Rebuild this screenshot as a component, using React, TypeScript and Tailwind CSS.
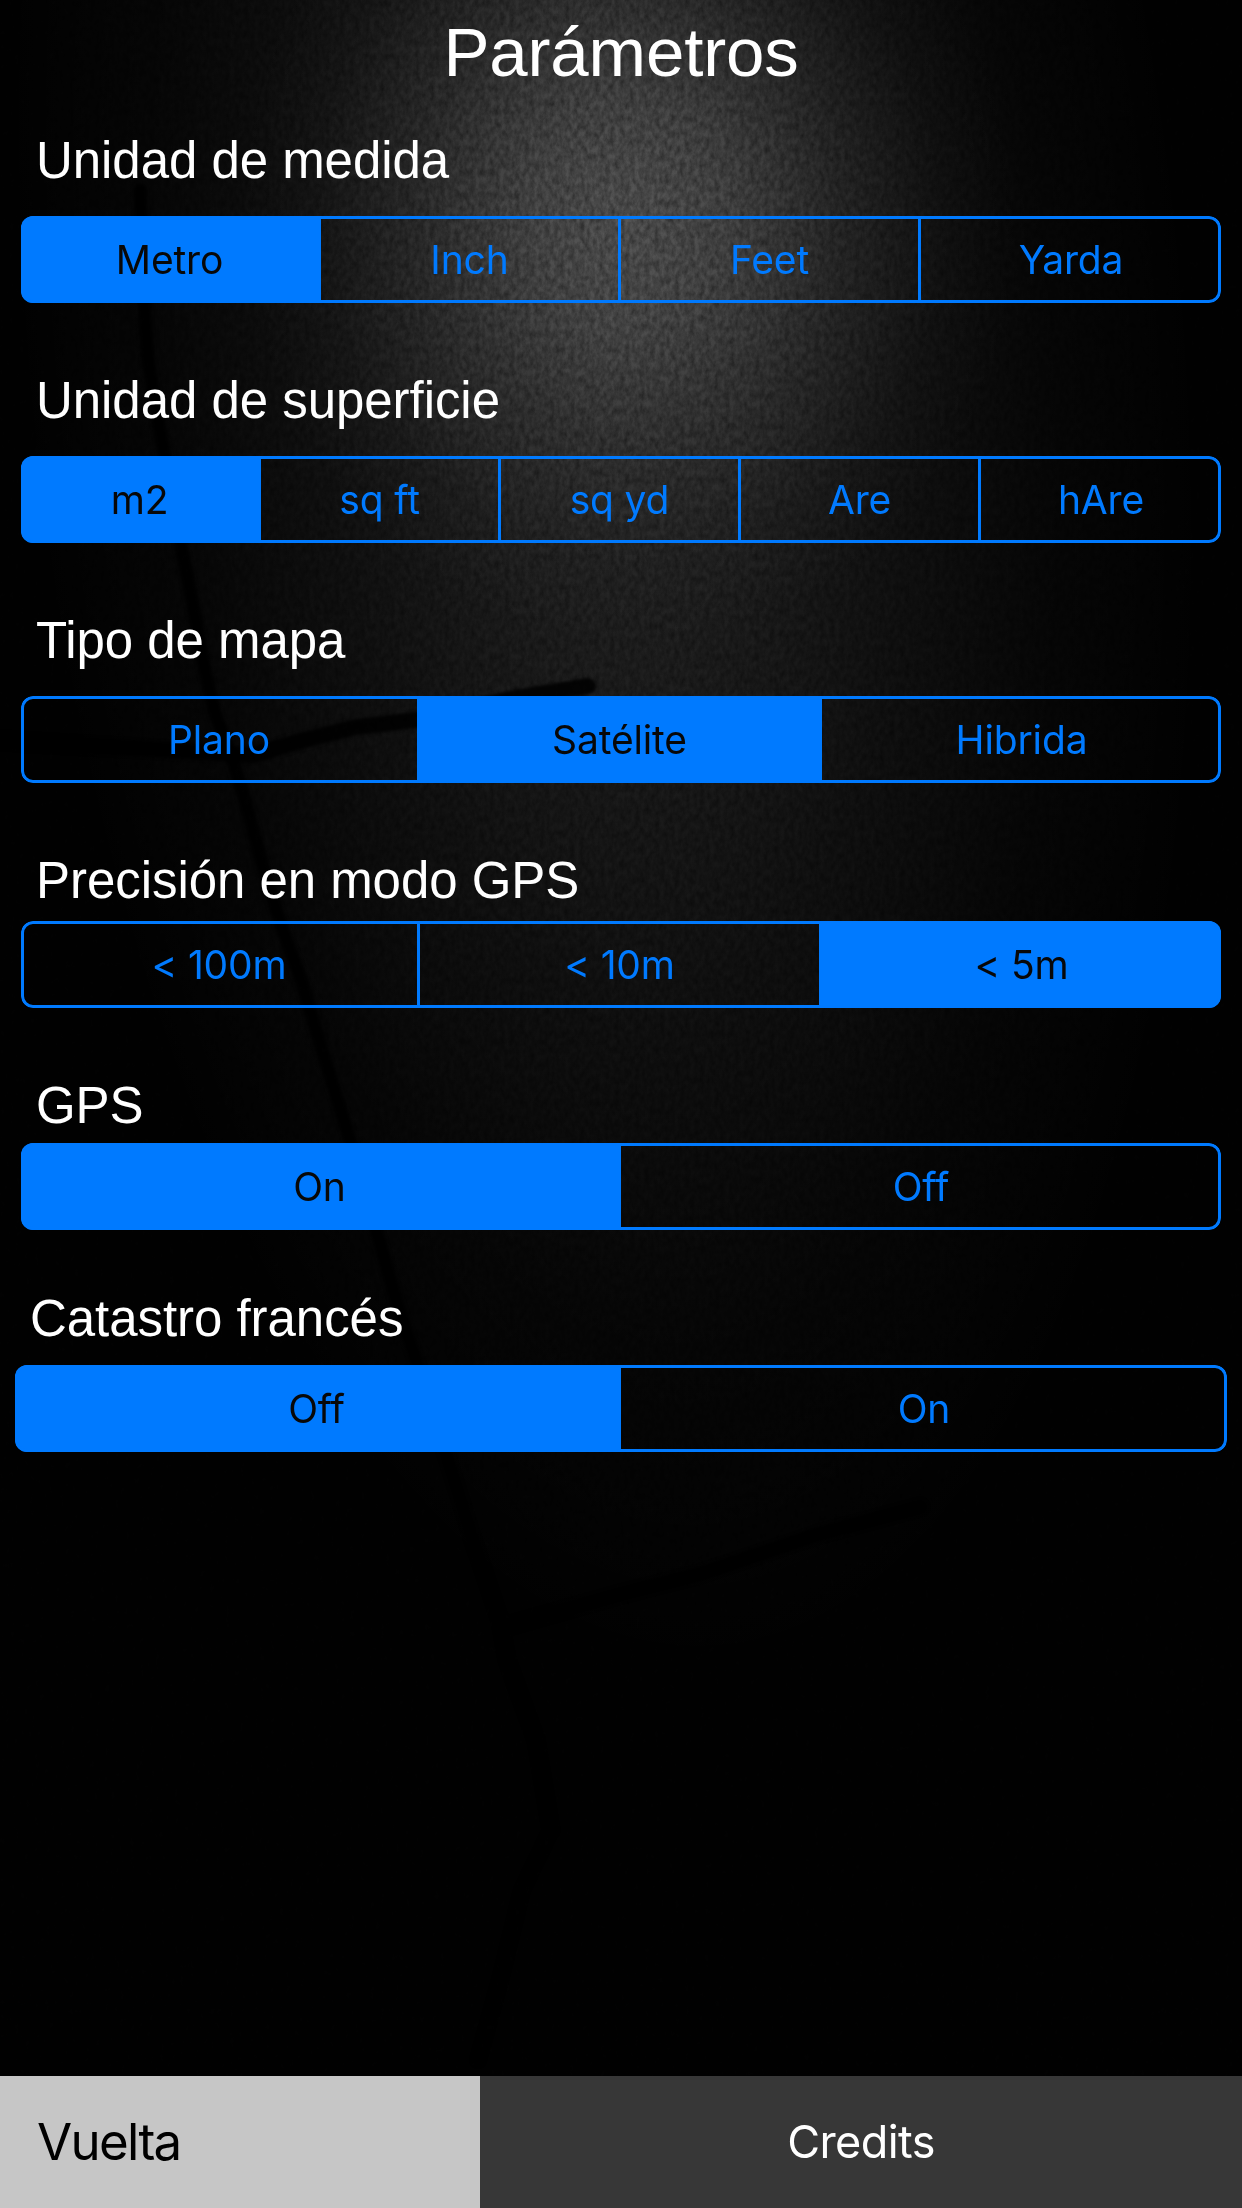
import clsx from 'clsx'
import { useState } from 'react'

type Setting = {
  id: string
  label: string
  options: string[]
  initial: number
  columns: string
  section: string
  gap: string
}

const settings: Setting[] = [
  {
    id: 'length',
    label: 'Unidad de medida',
    options: ['Metro', 'Inch', 'Feet', 'Yarda'],
    initial: 0,
    columns: 'grid-cols-4',
    section: 'mt-[38px] px-[21px]',
    gap: 'mb-[25px]',
  },
  {
    id: 'area',
    label: 'Unidad de superficie',
    options: ['m2', 'sq ft', 'sq yd', 'Are', 'hAre'],
    initial: 0,
    columns: 'grid-cols-5',
    section: 'mt-[68px] px-[21px]',
    gap: 'mb-[25px]',
  },
  {
    id: 'map',
    label: 'Tipo de mapa',
    options: ['Plano', 'Satélite', 'Hibrida'],
    initial: 1,
    columns: 'grid-cols-[399px_402px_399px]',
    section: 'mt-[68px] px-[21px]',
    gap: 'mb-[25px]',
  },
  {
    id: 'precision',
    label: 'Precisión en modo GPS',
    options: ['< 100m', '< 10m', '< 5m'],
    initial: 2,
    columns: 'grid-cols-[399px_402px_399px]',
    section: 'mt-[68px] px-[21px]',
    gap: 'mb-[10px]',
  },
  {
    id: 'gps',
    label: 'GPS',
    options: ['On', 'Off'],
    initial: 0,
    columns: 'grid-cols-2',
    section: 'mt-[68px] px-[21px]',
    gap: 'mb-[7px]',
  },
  {
    id: 'cadastre',
    label: 'Catastro francés',
    options: ['Off', 'On'],
    initial: 0,
    columns: 'grid-cols-2',
    section: 'mt-[59px] px-[15px]',
    gap: 'mb-[16px]',
  },
]

function Backdrop() {
  return (
    <svg
      className="absolute inset-0 h-full w-full"
      viewBox="0 0 1242 2208"
      preserveAspectRatio="none"
      aria-hidden="true"
    >
      <defs>
        <radialGradient
          id="wide"
          gradientUnits="userSpaceOnUse"
          cx="0"
          cy="0"
          r="1"
          gradientTransform="translate(605 330) rotate(-5) scale(590 1350)"
        >
          <stop offset="0" stopColor="#fff" stopOpacity="0.15" />
          <stop offset="0.25" stopColor="#fff" stopOpacity="0.12" />
          <stop offset="0.5" stopColor="#fff" stopOpacity="0.065" />
          <stop offset="0.75" stopColor="#fff" stopOpacity="0.022" />
          <stop offset="1" stopColor="#fff" stopOpacity="0" />
        </radialGradient>
        <radialGradient
          id="spot"
          gradientUnits="userSpaceOnUse"
          cx="0"
          cy="0"
          r="1"
          gradientTransform="translate(630 215) rotate(-8) scale(390 430)"
        >
          <stop offset="0" stopColor="#fff" stopOpacity="0.23" />
          <stop offset="0.25" stopColor="#fff" stopOpacity="0.185" />
          <stop offset="0.55" stopColor="#fff" stopOpacity="0.08" />
          <stop offset="0.8" stopColor="#fff" stopOpacity="0.02" />
          <stop offset="1" stopColor="#fff" stopOpacity="0" />
        </radialGradient>
        <filter id="grain" x="0" y="0" width="100%" height="100%">
          <feTurbulence type="fractalNoise" baseFrequency="0.2 0.13" numOctaves="4" seed="4" />
          <feColorMatrix values="0 0 0 0 0  0 0 0 0 0  0 0 0 0 0  1 0 0 0 -0.25" />
        </filter>
        <filter id="soft">
          <feGaussianBlur stdDeviation="1.8" />
        </filter>
      </defs>
      <rect width="1242" height="2208" fill="#000" />
      <rect width="1242" height="2208" fill="#fff" fillOpacity="0.006" />
      <rect width="1242" height="2208" fill="url(#wide)" />
      <rect width="1242" height="2208" fill="url(#spot)" />
      <rect width="1242" height="2208" filter="url(#grain)" opacity="0.65" />
      {/* Plot boundaries */}
      <g fill="none" stroke="#000" strokeLinecap="round" strokeLinejoin="round" filter="url(#soft)">
        <path
          strokeWidth="13"
          opacity="0.85"
          d="M140 190L145 320L148 360L158 420L168 475L182 550L192 600L204 665L214 710L234 765L245 800L261 860L281 925L301 980L325 1060L347 1130L380 1243L396 1300L416 1360L451 1470L473 1540L500 1620L507 1660L536 1740L551 1830"
        />
        <path strokeWidth="12" opacity="0.35" d="M551 1830L522 1890L500 1980L478 2060" />
        <path
          strokeWidth="16"
          opacity="0.85"
          d="M0 740L24 742L150 749L253 755L297 742L356 727L416 720L515 698L588 686"
        />
        <path strokeWidth="15" opacity="0.85" d="M504 1627L621 1594L700 1574L819 1534L920 1507" />
      </g>
    </svg>
  )
}

function SegmentedControl({ setting }: { setting: Setting }) {
  const [selected, setSelected] = useState(setting.initial)
  const last = setting.options.length - 1

  return (
    <div
      className={clsx(
        'relative grid h-[87px] overflow-hidden rounded-[12px] text-[39px] leading-[86px] tracking-[-0.15px]',
        setting.columns,
      )}
    >
      {setting.options.map((option, index) => (
        <button
          key={option}
          type="button"
          onClick={() => setSelected(index)}
          className={clsx(
            'text-center font-["Inter",sans-serif]',
            index !== last && 'border-r-[3px] border-[#007aff]',
            index === selected ? 'bg-[#007aff] text-[#080808]' : 'text-[#007aff]',
          )}
        >
          {option}
        </button>
      ))}
      <div className="pointer-events-none absolute inset-0 rounded-[12px] border-[3px] border-[#007aff]" />
    </div>
  )
}

export default function App() {
  return (
    <div className="relative h-[2208px] w-[1242px] overflow-hidden bg-black">
      <Backdrop />
      <div className="relative flex h-full flex-col">
        <h1 className='mt-[13px] text-center font-["Liberation_Sans",sans-serif] text-[69px] leading-[80px] tracking-[-0.15px] text-white'>
          Parámetros
        </h1>

        {settings.map((setting) => (
          <section key={setting.id} className={setting.section}>
            <h2
              className={clsx(
                'pl-[15px] font-["Liberation_Sans",sans-serif] text-[51px] leading-[60px] tracking-[-0.05px] text-white',
                setting.gap,
              )}
            >
              {setting.label}
            </h2>
            <SegmentedControl setting={setting} />
          </section>
        ))}

        <footer className='mt-auto flex h-[132px] font-["Inter",sans-serif]'>
          <button
            type="button"
            className="w-[480px] bg-[#c6c6c6] pl-[37px] text-left text-[51px] tracking-[-1.7px] text-black"
          >
            Vuelta
          </button>
          <button
            type="button"
            className="flex-1 bg-[#373737] text-center text-[45px] tracking-[-0.6px] text-white"
          >
            Credits
          </button>
        </footer>
      </div>
    </div>
  )
}
